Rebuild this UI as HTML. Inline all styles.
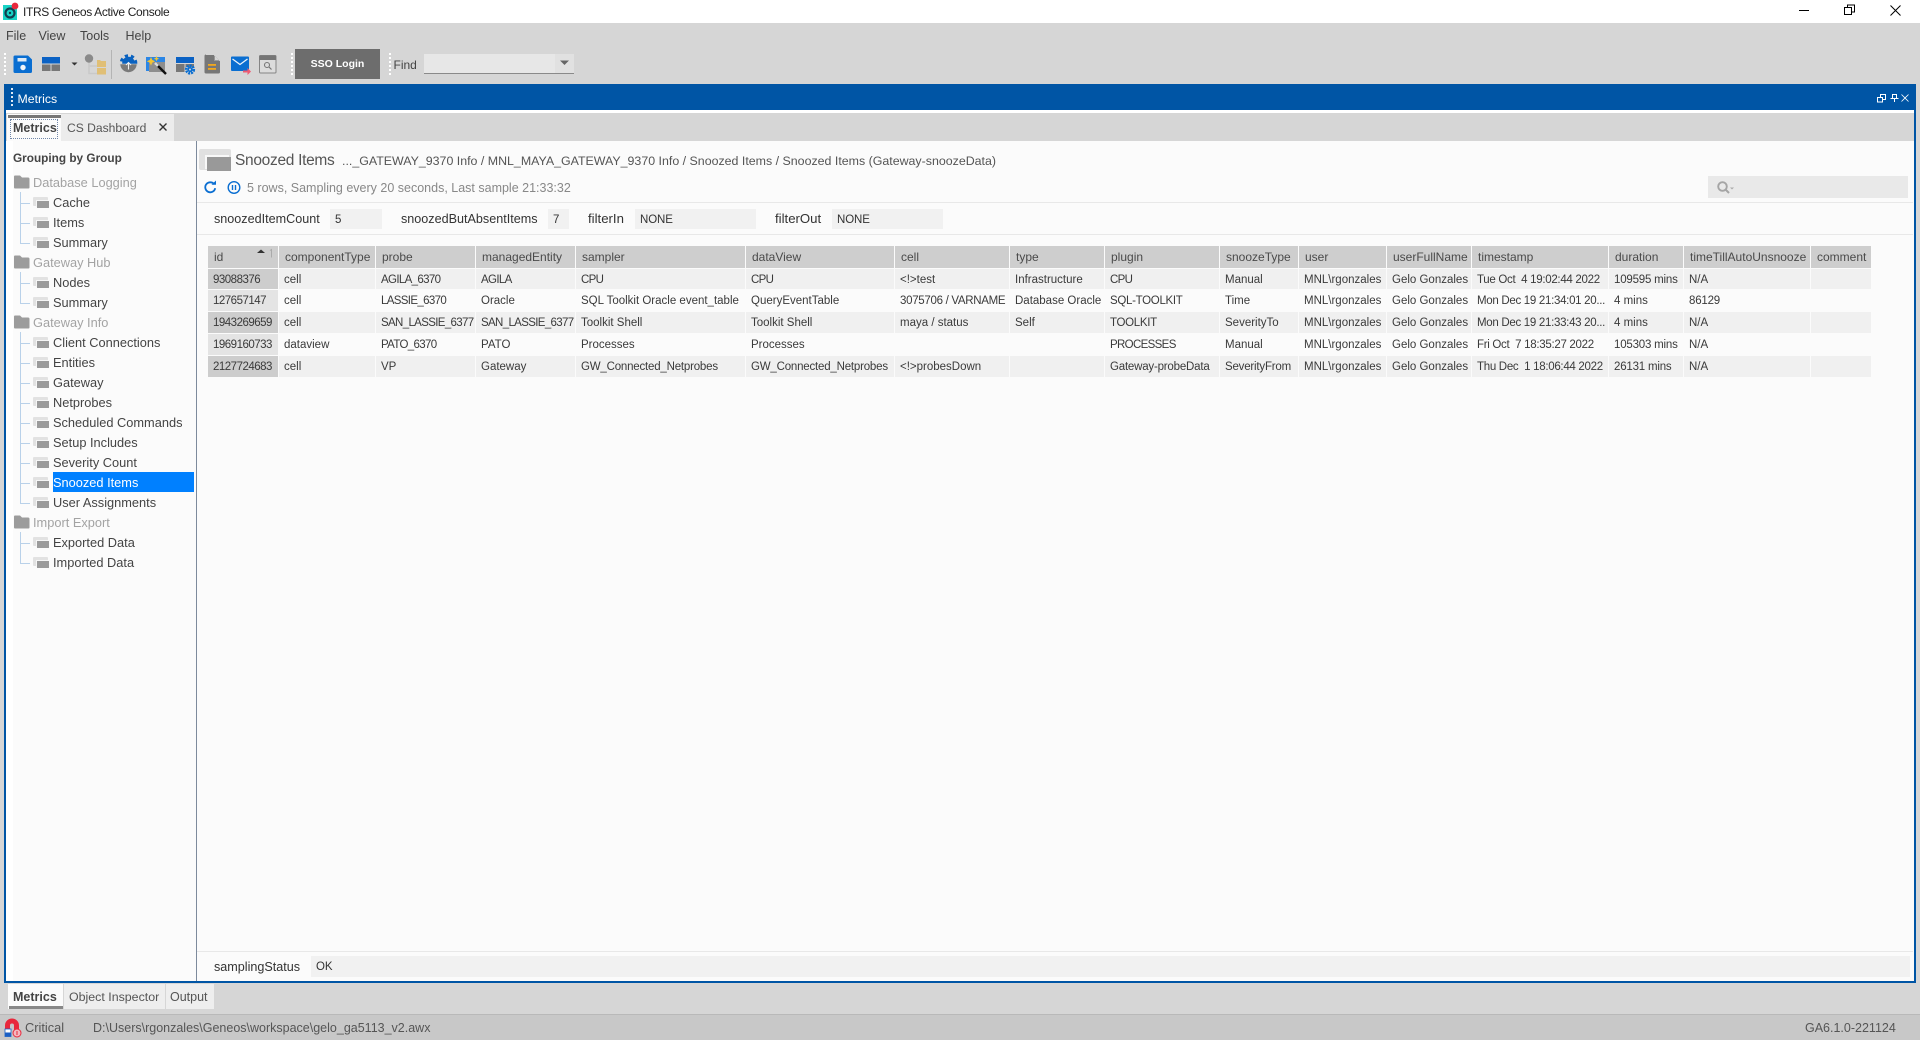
<!DOCTYPE html>
<html>
<head>
<meta charset="utf-8">
<title>ITRS Geneos Active Console</title>
<style>
html,body{margin:0;padding:0;width:1920px;height:1040px;overflow:hidden;background:#d6d6d6}
body{position:relative;font-family:"Liberation Sans",sans-serif;font-size:12.8px;color:#444}
.a{position:absolute}
.t{position:absolute;white-space:pre;line-height:20px;height:20px}
.g{color:#a3a3a3}
.b{font-weight:bold}
#grid{position:absolute;left:208px;top:246px;display:grid;
grid-template-columns:71px 97px 100px 100px 170px 149px 115px 95px 115px 79px 88px 85px 137px 75px 127px 61px;
grid-template-rows:22px 20px 21px 21px 21px 21px;row-gap:1px;font-size:11.5px;color:#3a3a3a}
#grid div{margin-right:1.5px;padding-left:5px;white-space:pre;overflow:hidden;line-height:22px;background:#f0f0f0}
#grid .h{background:#cecece;color:#4a4a4a;padding-left:6px;line-height:22px;font-size:12px}
#grid .o{background:#fbfbfb}
#grid .i{background:#cdcdcd;letter-spacing:-.5px}
#grid .j{background:#e4e4e4;letter-spacing:-.5px}
#grid .u{letter-spacing:-.65px}
#grid .v{letter-spacing:-.3px}
#grid .s{letter-spacing:-.3px}
#grid .d{letter-spacing:-.2px}
.ic{position:absolute;width:16px;height:12px;transform:translateY(1px)}
.ic:before{content:"";position:absolute;left:0;top:0;width:15px;height:9px;background:#e2e2e2;border-radius:1px}
.ic:after{content:"";position:absolute;left:4px;top:4px;width:12px;height:7px;background:#9b9b9b;box-shadow:-1px -1px 0 #f6f6f6}
.hl{position:absolute;background:#b9d1e9}
.box{position:absolute;background:#f1f1f1;height:20px}
.nv{font-size:11.5px;letter-spacing:-.1px}
</style>
</head>
<body>
<!-- title bar -->
<div class="a" style="left:0;top:0;width:1920px;height:23px;background:#fff"></div>
<div class="t" style="left:23px;top:2px;font-size:12px;letter-spacing:-.35px;color:#222">ITRS Geneos Active Console</div>
<svg class="a" style="left:0;top:0" width="1920" height="112" viewBox="0 0 1920 112">
  <!-- app icon -->
  <rect x="3" y="5" width="14" height="15" fill="#19d3c5"/>
  <circle cx="10" cy="13" r="4.5" fill="none" stroke="#123f4f" stroke-width="2.2"/>
  <circle cx="10" cy="13" r="1.2" fill="#123f4f"/>
  <circle cx="15" cy="6" r="3.4" fill="#e8283c"/>
  <!-- window controls -->
  <path d="M1799 10.5h10" stroke="#000" stroke-width="1"/>
  <path d="M1844.5 7.5h7v7h-7zM1847.5 7.5v-2.5h7v7h-3" fill="none" stroke="#000" stroke-width="1"/>
  <path d="M1890.5 5.5l10 10M1900.5 5.5l-10 10" stroke="#000" stroke-width="1"/>
  <!-- grips -->
  <g fill="#fff">
    <rect x="4" y="53" width="2" height="2"/><rect x="4" y="57" width="2" height="2"/><rect x="4" y="61" width="2" height="2"/><rect x="4" y="65" width="2" height="2"/><rect x="4" y="69" width="2" height="2"/><rect x="4" y="73" width="2" height="2"/>
    <rect x="291" y="53" width="2" height="2"/><rect x="291" y="57" width="2" height="2"/><rect x="291" y="61" width="2" height="2"/><rect x="291" y="65" width="2" height="2"/><rect x="291" y="69" width="2" height="2"/><rect x="291" y="73" width="2" height="2"/>
    <rect x="389" y="53" width="2" height="2"/><rect x="389" y="57" width="2" height="2"/><rect x="389" y="61" width="2" height="2"/><rect x="389" y="65" width="2" height="2"/><rect x="389" y="69" width="2" height="2"/><rect x="389" y="73" width="2" height="2"/>
  </g>
  <!-- save -->
  <path d="M15 55.5h13l4 4v12a1.500 1.500 0 0 1-1.500 1.500h-15.500a1.500 1.500 0 0 1-1.500-1.500v-14.500a1.500 1.500 0 0 1 1.500-1.500z" fill="#0a6ed1"/>
  <rect x="17.500" y="58" width="9" height="3.500" fill="#dfeaf5"/>
  <circle cx="23" cy="67.500" r="2.700" fill="#f0f4f8"/>
  <!-- layout -->
  <rect x="42" y="57" width="18" height="6.500" fill="#0b62c4"/>
  <rect x="42" y="64.500" width="8.500" height="6.500" fill="#777"/><rect x="51.500" y="64.500" width="8.500" height="6.500" fill="#777"/>
  <path d="M71.500 62.500h6l-3 3z" fill="#333"/>
  <!-- tree -->
  <path d="M89 60v13.500h8M89 66h8" fill="none" stroke="#c9c9c9" stroke-width="1.500"/>
  <circle cx="89" cy="58.500" r="4.200" fill="#8a8a8a"/>
  <path d="M97 60h3l1 1h5v6h-9z" fill="#e0bf76"/><path d="M97 68h9v6.500h-9z" fill="#e0bf76"/>
  <!-- gear -->
  <circle cx="128.500" cy="63" r="7.300" fill="none" stroke="#0a62c0" stroke-width="3" stroke-dasharray="3.200 2.900"/>
  <circle cx="128.500" cy="63" r="6.300" fill="#0a62c0"/>
  <path d="M120 64h17a8.500 8.500 0 0 1-17 0z" fill="#7a7a7a" stroke="#d6d6d6" stroke-width=".6"/>
  <path d="M128.500 62.500v7M126 65l2.500-2.500 2.500 2.500" stroke="#eee" fill="none" stroke-width="1.100"/>
  <!-- magic -->
  <rect x="146" y="57" width="19" height="5" fill="#2b86e6"/><rect x="146" y="62" width="3" height="9" fill="#2b86e6"/>
  <rect x="149" y="62" width="16" height="10" fill="#8e8e8e"/>
  <path d="M151 57l1.300 3 3 1.300-3 1.300-1.300 3-1.300-3-3-1.300 3-1.300zM156.500 56l.8 1.900 1.900.8-1.900.8-.8 1.900-.8-1.900-1.900-.8 1.900-.8z" fill="#f4c430"/>
  <path d="M156 64l10 10" stroke="#111" stroke-width="2.400"/><path d="M155 63l3 3" stroke="#ddd" stroke-width="2.400"/>
  <!-- window gear -->
  <rect x="176" y="57" width="18" height="6" fill="#0b62c4"/>
  <rect x="176" y="64" width="8.500" height="8" fill="#777"/><rect x="185.500" y="64" width="8.500" height="3" fill="#777"/>
  <circle cx="190" cy="69.500" r="3.800" fill="none" stroke="#0a6ed1" stroke-width="2.600" stroke-dasharray="2 .9"/>
  <circle cx="190" cy="69.500" r="2.600" fill="#0a6ed1"/><circle cx="190" cy="69.500" r="1" fill="#d6d6d6"/>
  <!-- doc -->
  <path d="M206 55h8l6 6v11a1.500 1.500 0 0 1-1.500 1.500h-12.500a1.500 1.500 0 0 1-1.500-1.500v-16a1.500 1.500 0 0 1 1.500-1.500z" fill="#777"/>
  <path d="M214 55l6 6h-6z" fill="#d6d6d6"/><path d="M214.500 56v4.500h4.500" fill="none" stroke="#888" stroke-width=".8"/>
  <rect x="208" y="64" width="8" height="1.800" fill="#f2a81d"/><rect x="208" y="68" width="8" height="1.800" fill="#f2a81d"/>
  <!-- mail -->
  <rect x="231" y="56.500" width="18" height="14.500" rx="1" fill="#0a6ed1"/>
  <path d="M232.500 59l7.500 5.500 7.500-5.500" fill="none" stroke="#eaf2fb" stroke-width="1.300"/>
  <path d="M243 70.500h4.500v-2.500l3.500 3.500-3.500 3.500v-2.500h-4.500z" fill="#ef5b73"/>
  <!-- window search -->
  <rect x="259.500" y="55.500" width="16.500" height="17.500" rx="1" fill="#dcdcdc" stroke="#858585"/>
  <rect x="259.500" y="55.500" width="16.500" height="4.500" fill="#757575"/>
  <circle cx="267" cy="65" r="2.500" fill="none" stroke="#777" stroke-width="1.100"/><path d="M269 67l2.500 2.500" stroke="#777" stroke-width="1.200"/>
  <path d="M111.500 50v29" stroke="#b4b4b4" stroke-width="1"/>
</svg>
<!-- menu -->
<div class="t" style="left:6px;top:26px;font-size:12.5px">File</div>
<div class="t" style="left:38.500px;top:26px;font-size:12.5px">View</div>
<div class="t" style="left:80px;top:26px;font-size:12.5px">Tools</div>
<div class="t" style="left:125.500px;top:26px;font-size:12.5px">Help</div>
<!-- SSO -->
<div class="a b" style="left:295px;top:49px;width:85px;height:30px;background:#6d6d6d;color:#fff;font-size:10.5px;line-height:31px;text-align:center">SSO Login</div>
<div class="t" style="left:393.500px;top:55px;font-size:12px">Find</div>
<div class="a" style="left:424px;top:54px;width:150px;height:19px;background:#e7e7e7;border-bottom:1px solid #8a8a8a"></div>
<div class="a" style="left:555px;top:54px;width:19px;height:19px;background:#e1e1e1"></div>
<svg class="a" style="left:555px;top:54px" width="19" height="19"><path d="M5 6.500h9l-4.500 4.500z" fill="#666"/></svg>

<!-- Metrics panel -->
<div class="a" style="left:4px;top:84px;width:1912px;height:26px;background:#0055a5"></div>
<div class="a" style="left:4px;top:110px;width:1912px;height:873px;background:#0055a5"></div>
<div class="a" style="left:6px;top:110px;width:1908px;height:871px;background:#fff"></div>
<svg class="a" style="left:10px;top:88px" width="4" height="20"><g fill="#dfe9f4"><rect x="1" y="0" width="2" height="2"/><rect x="1" y="4" width="2" height="2"/><rect x="1" y="8" width="2" height="2"/><rect x="1" y="12" width="2" height="2"/><rect x="1" y="16" width="2" height="2"/></g></svg>
<div class="t" style="left:17.500px;top:88.500px;color:#fff;font-size:12.3px">Metrics</div>
<svg class="a" style="left:1870px;top:88px" width="44" height="18" fill="none" stroke="#fff" stroke-width="1">
  <path d="M7.500 9.500h5v4.500h-5zM10.500 9v-2.500h5v5h-2.500"/>
  <path d="M22.500 6.500h4v4h-4zM20.500 10.500h8M24.500 10.500v3.500"/>
  <path d="M31.500 6.500l7 7M38.500 6.500l-7 7" stroke-width=".8"/>
</svg>
<!-- tabs -->
<div class="a" style="left:6px;top:113px;width:1908px;height:28px;background:#d6d6d6"></div>
<div class="a" style="left:7px;top:114px;width:54px;height:27px;background:#fbfbfb"></div>
<div class="a" style="left:8px;top:115px;width:54px;height:3px;background:#777"></div>
<div class="a" style="left:10px;top:119px;width:48px;height:20px;border:1px dotted #6f86a8;box-sizing:border-box"></div>
<div class="a" style="left:61px;top:114px;width:113px;height:27px;background:#ececec"></div>
<div class="t b" style="left:13px;top:117.500px;font-size:12.500px;color:#444">Metrics</div>
<div class="t" style="left:67px;top:117.500px;font-size:12.1px;color:#555">CS Dashboard</div>
<svg class="a" style="left:158px;top:122px" width="10" height="10"><path d="M1.500 1.500l7 7M8.500 1.500l-7 7" stroke="#333" stroke-width="1.400"/></svg>

<!-- tree panel -->
<div class="a" style="left:13px;top:141px;width:183px;height:840px;background:#fbfbfb"></div>
<div class="a" style="left:196px;top:141px;width:1px;height:840px;background:#7d8a9c"></div>
<div class="a" style="left:197px;top:141px;width:1717px;height:840px;background:#fbfbfb"></div>
<div class="t b" style="left:13px;top:148px;font-size:11.8px;color:#444">Grouping by Group</div>

<!-- tree lines -->
<div class="hl" style="left:20px;top:192px;width:1px;height:52px"></div>
<div class="hl" style="left:20px;top:203px;width:10px;height:1px"></div><div class="hl" style="left:20px;top:223px;width:10px;height:1px"></div><div class="hl" style="left:20px;top:243px;width:10px;height:1px"></div>
<div class="hl" style="left:20px;top:272px;width:1px;height:32px"></div>
<div class="hl" style="left:20px;top:283px;width:10px;height:1px"></div><div class="hl" style="left:20px;top:303px;width:10px;height:1px"></div>
<div class="hl" style="left:20px;top:332px;width:1px;height:172px"></div>
<div class="hl" style="left:20px;top:343px;width:10px;height:1px"></div><div class="hl" style="left:20px;top:363px;width:10px;height:1px"></div><div class="hl" style="left:20px;top:383px;width:10px;height:1px"></div><div class="hl" style="left:20px;top:403px;width:10px;height:1px"></div><div class="hl" style="left:20px;top:423px;width:10px;height:1px"></div><div class="hl" style="left:20px;top:443px;width:10px;height:1px"></div><div class="hl" style="left:20px;top:463px;width:10px;height:1px"></div><div class="hl" style="left:20px;top:483px;width:10px;height:1px"></div><div class="hl" style="left:20px;top:503px;width:10px;height:1px"></div>
<div class="hl" style="left:20px;top:532px;width:1px;height:32px"></div>
<div class="hl" style="left:20px;top:543px;width:10px;height:1px"></div><div class="hl" style="left:20px;top:563px;width:10px;height:1px"></div>

<!-- folders -->
<svg class="a" style="left:13px;top:175px" width="17" height="360" fill="#9c9c9c">
  <path d="M1 1.500a1 1 0 0 1 1-1h5l2 2h6a1.500 1.500 0 0 1 1.500 1.500v8.500a1 1 0 0 1-1 1h-13.500a1 1 0 0 1-1-1z"/>
  <path transform="translate(0,80)" d="M1 1.500a1 1 0 0 1 1-1h5l2 2h6a1.500 1.500 0 0 1 1.500 1.500v8.500a1 1 0 0 1-1 1h-13.500a1 1 0 0 1-1-1z"/>
  <path transform="translate(0,140)" d="M1 1.500a1 1 0 0 1 1-1h5l2 2h6a1.500 1.500 0 0 1 1.500 1.500v8.500a1 1 0 0 1-1 1h-13.500a1 1 0 0 1-1-1z"/>
  <path transform="translate(0,340)" d="M1 1.500a1 1 0 0 1 1-1h5l2 2h6a1.500 1.500 0 0 1 1.500 1.500v8.500a1 1 0 0 1-1 1h-13.500a1 1 0 0 1-1-1z"/>
</svg>
<div class="t g" style="left:33px;top:173px">Database Logging</div>
<div class="t g" style="left:33px;top:253px">Gateway Hub</div>
<div class="t g" style="left:33px;top:313px">Gateway Info</div>
<div class="t g" style="left:33px;top:513px">Import Export</div>

<!-- selection -->
<div class="a" style="left:53px;top:472px;width:141px;height:20px;background:#0080ff"></div>

<!-- tree leaves -->
<div class="ic" style="left:33px;top:196px"></div><div class="t" style="left:53px;top:193px">Cache</div>
<div class="ic" style="left:33px;top:216px"></div><div class="t" style="left:53px;top:213px">Items</div>
<div class="ic" style="left:33px;top:236px"></div><div class="t" style="left:53px;top:233px">Summary</div>
<div class="ic" style="left:33px;top:276px"></div><div class="t" style="left:53px;top:273px">Nodes</div>
<div class="ic" style="left:33px;top:296px"></div><div class="t" style="left:53px;top:293px">Summary</div>
<div class="ic" style="left:33px;top:336px"></div><div class="t" style="left:53px;top:333px">Client Connections</div>
<div class="ic" style="left:33px;top:356px"></div><div class="t" style="left:53px;top:353px">Entities</div>
<div class="ic" style="left:33px;top:376px"></div><div class="t" style="left:53px;top:373px">Gateway</div>
<div class="ic" style="left:33px;top:396px"></div><div class="t" style="left:53px;top:393px">Netprobes</div>
<div class="ic" style="left:33px;top:416px"></div><div class="t" style="left:53px;top:413px">Scheduled Commands</div>
<div class="ic" style="left:33px;top:436px"></div><div class="t" style="left:53px;top:433px">Setup Includes</div>
<div class="ic" style="left:33px;top:456px"></div><div class="t" style="left:53px;top:453px">Severity Count</div>
<div class="ic" style="left:33px;top:476px"></div><div class="t" style="left:53px;top:473px;color:#fff">Snoozed Items</div>
<div class="ic" style="left:33px;top:496px"></div><div class="t" style="left:53px;top:493px">User Assignments</div>
<div class="ic" style="left:33px;top:536px"></div><div class="t" style="left:53px;top:533px">Exported Data</div>
<div class="ic" style="left:33px;top:556px"></div><div class="t" style="left:53px;top:553px">Imported Data</div>

<!-- view header -->
<div class="a" style="left:199px;top:149px;width:32px;height:21px;background:#e0e0e0;border-radius:2px"></div>
<div class="a" style="left:207px;top:157px;width:24px;height:14px;background:#999;box-shadow:-2px -2px 0 #f8f8f8"></div>
<div class="t" style="left:235px;top:151px;font-size:15.5px;color:#555;letter-spacing:-.3px">Snoozed Items</div>
<div class="t" style="left:342px;top:151px;font-size:12.4px;color:#555">..._GATEWAY_9370 Info / MNL_MAYA_GATEWAY_9370 Info / Snoozed Items / Snoozed Items (Gateway-snoozeData)</div>
<svg class="a" style="left:203px;top:180px" width="40" height="15" fill="none">
  <path d="M11.200 4.200a5 5 0 1 0 1 4" stroke="#0a6ed1" stroke-width="1.800"/>
  <path d="M8.500 4.700h4.500v-4.200z" fill="#0a6ed1"/>
  <circle cx="31" cy="7.500" r="5.800" stroke="#0a6ed1" stroke-width="1.400"/>
  <path d="M29.500 5v5M32.500 5v5" stroke="#0a6ed1" stroke-width="1.400"/>
</svg>
<div class="t" style="left:247px;top:177.500px;font-size:12.5px;color:#888">5 rows, Sampling every 20 seconds, Last sample 21:33:32</div>
<div class="a" style="left:1708px;top:176px;width:200px;height:22px;background:#e9e9e9"></div>
<svg class="a" style="left:1716px;top:180px" width="20" height="15" fill="none"><circle cx="6.500" cy="6.500" r="4.300" stroke="#a5a5a5" stroke-width="1.900"/><path d="M9.500 9.500l3.500 3.500" stroke="#a5a5a5" stroke-width="2"/><path d="M14 7.500h4l-2 2z" fill="#aaa"/></svg>
<div class="a" style="left:197px;top:202px;width:1716px;height:1px;background:#e8e8e8"></div>

<!-- headlines -->
<div class="t" style="left:214px;top:209px;color:#333;font-size:12.6px">snoozedItemCount</div>
<div class="box" style="left:330px;top:209px;width:52px"></div><div class="t nv" style="left:335px;top:210px;color:#333">5</div>
<div class="t" style="left:401px;top:209px;color:#333;font-size:12.6px">snoozedButAbsentItems</div>
<div class="box" style="left:548px;top:209px;width:21px"></div><div class="t nv" style="left:553px;top:210px;color:#333">7</div>
<div class="t" style="left:588px;top:209px;color:#333;font-size:13.2px">filterIn</div>
<div class="box" style="left:635px;top:209px;width:121px"></div><div class="t nv" style="left:640px;top:210px;color:#333">NONE</div>
<div class="t" style="left:775px;top:209px;color:#333;font-size:13.2px">filterOut</div>
<div class="box" style="left:832px;top:209px;width:111px"></div><div class="t nv" style="left:837px;top:210px;color:#333">NONE</div>
<div class="a" style="left:197px;top:234px;width:1716px;height:1px;background:#e8e8e8"></div>

<!-- table -->
<div id="grid">
<div class="h">id</div><div class="h">componentType</div><div class="h">probe</div><div class="h">managedEntity</div><div class="h">sampler</div><div class="h">dataView</div><div class="h">cell</div><div class="h">type</div><div class="h">plugin</div><div class="h">snoozeType</div><div class="h">user</div><div class="h">userFullName</div><div class="h">timestamp</div><div class="h">duration</div><div class="h">timeTillAutoUnsnooze</div><div class="h">comment</div>

<div class="i">93088376</div><div>cell</div><div class="u">AGILA_6370</div><div class="u">AGILA</div><div class="u">CPU</div><div class="u">CPU</div><div>&lt;!&gt;test</div><div>Infrastructure</div><div class="u">CPU</div><div>Manual</div><div>MNL\rgonzales</div><div>Gelo Gonzales</div><div class="s">Tue Oct  4 19:02:44 2022</div><div class="d">109595 mins</div><div>N/A</div><div></div>

<div class="j">127657147</div><div class="o">cell</div><div class="o u">LASSIE_6370</div><div class="o">Oracle</div><div class="o">SQL Toolkit Oracle event_table</div><div class="o">QueryEventTable</div><div class="o v">3075706 / VARNAME</div><div class="o">Database Oracle</div><div class="o v">SQL-TOOLKIT</div><div class="o">Time</div><div class="o">MNL\rgonzales</div><div class="o">Gelo Gonzales</div><div class="o s">Mon Dec 19 21:34:01 20...</div><div class="o">4 mins</div><div class="o d">86129</div><div class="o"></div>

<div class="i">1943269659</div><div>cell</div><div class="u">SAN_LASSIE_6377</div><div class="u">SAN_LASSIE_6377</div><div>Toolkit Shell</div><div>Toolkit Shell</div><div>maya / status</div><div>Self</div><div class="v">TOOLKIT</div><div>SeverityTo</div><div>MNL\rgonzales</div><div>Gelo Gonzales</div><div class="s">Mon Dec 19 21:33:43 20...</div><div>4 mins</div><div>N/A</div><div></div>

<div class="j">1969160733</div><div class="o">dataview</div><div class="o u">PATO_6370</div><div class="o">PATO</div><div class="o">Processes</div><div class="o">Processes</div><div class="o"></div><div class="o"></div><div class="o u">PROCESSES</div><div class="o">Manual</div><div class="o">MNL\rgonzales</div><div class="o">Gelo Gonzales</div><div class="o s">Fri Oct  7 18:35:27 2022</div><div class="o d">105303 mins</div><div class="o">N/A</div><div class="o"></div>

<div class="i">2127724683</div><div>cell</div><div>VP</div><div>Gateway</div><div class="d">GW_Connected_Netprobes</div><div class="d">GW_Connected_Netprobes</div><div>&lt;!&gt;probesDown</div><div></div><div class="d">Gateway-probeData</div><div class="d">SeverityFrom</div><div>MNL\rgonzales</div><div>Gelo Gonzales</div><div class="s">Thu Dec  1 18:06:44 2022</div><div class="d">26131 mins</div><div>N/A</div><div></div>
</div>
<svg class="a" style="left:256px;top:248px" width="18" height="12"><path d="M1 5l4-3.500 4 3.500z" fill="#333"/><path d="M14 2.500l1.500-1v8" fill="none" stroke="#aaa" stroke-width="1"/></svg>

<!-- sampling status -->
<div class="a" style="left:197px;top:951px;width:1716px;height:1px;background:#e8e8e8"></div>
<div class="t" style="left:214px;top:957px;color:#333;font-size:12.6px">samplingStatus</div>
<div class="a" style="left:311px;top:956px;width:1599px;height:21px;background:#f1f1f1"></div>
<div class="t nv" style="left:316px;top:957px;color:#333">OK</div>

<!-- bottom tabs -->
<div class="a" style="left:8px;top:984px;width:55px;height:25px;background:#fbfbfb"></div>
<div class="a" style="left:9px;top:1006px;width:54px;height:3px;background:#888"></div>
<div class="a" style="left:64px;top:984px;width:101px;height:25px;background:#eeeeee"></div>
<div class="a" style="left:166px;top:984px;width:48px;height:25px;background:#eeeeee"></div>
<div class="t b" style="left:13px;top:987px;font-size:12.500px">Metrics</div>
<div class="t" style="left:69px;top:987px;font-size:12.400px;color:#555">Object Inspector</div>
<div class="t" style="left:170px;top:987px;font-size:12.500px;color:#555">Output</div>

<!-- status bar -->
<div class="a" style="left:0;top:1014px;width:1920px;height:26px;background:#c8c8c8;border-top:1px solid #b9b9b9;box-sizing:border-box"></div>
<svg class="a" style="left:4px;top:1018px" width="20" height="21">
  <path d="M1 14v-6.500a7 7 0 0 1 14 0v6.500h-5v-6.500a2 2 0 0 0-4 0v6.500z" fill="#e8283c"/>
  <rect x="1" y="11" width="6" height="3.500" fill="#fff"/>
  <rect x="1" y="14.500" width="6" height="4" fill="#1a5fc4"/>
  <rect x="1" y="11" width="6" height="7.500" fill="none" stroke="#1a5fc4" stroke-width=".8"/>
  <circle cx="13" cy="15" r="4" fill="#f5b8c0" stroke="#e8283c" stroke-width="1"/>
  <path d="M13 13v4" stroke="#e8283c" stroke-width="1"/>
</svg>
<div class="t" style="left:25px;top:1018px;font-size:12.8px;color:#555">Critical</div>
<div class="t" style="left:93px;top:1018px;font-size:12.500px;color:#555">D:\Users\rgonzales\Geneos\workspace\gelo_ga5113_v2.awx</div>
<div class="t" style="left:1805px;top:1018px;font-size:12.500px;color:#555">GA6.1.0-221124</div>
</body>
</html>
